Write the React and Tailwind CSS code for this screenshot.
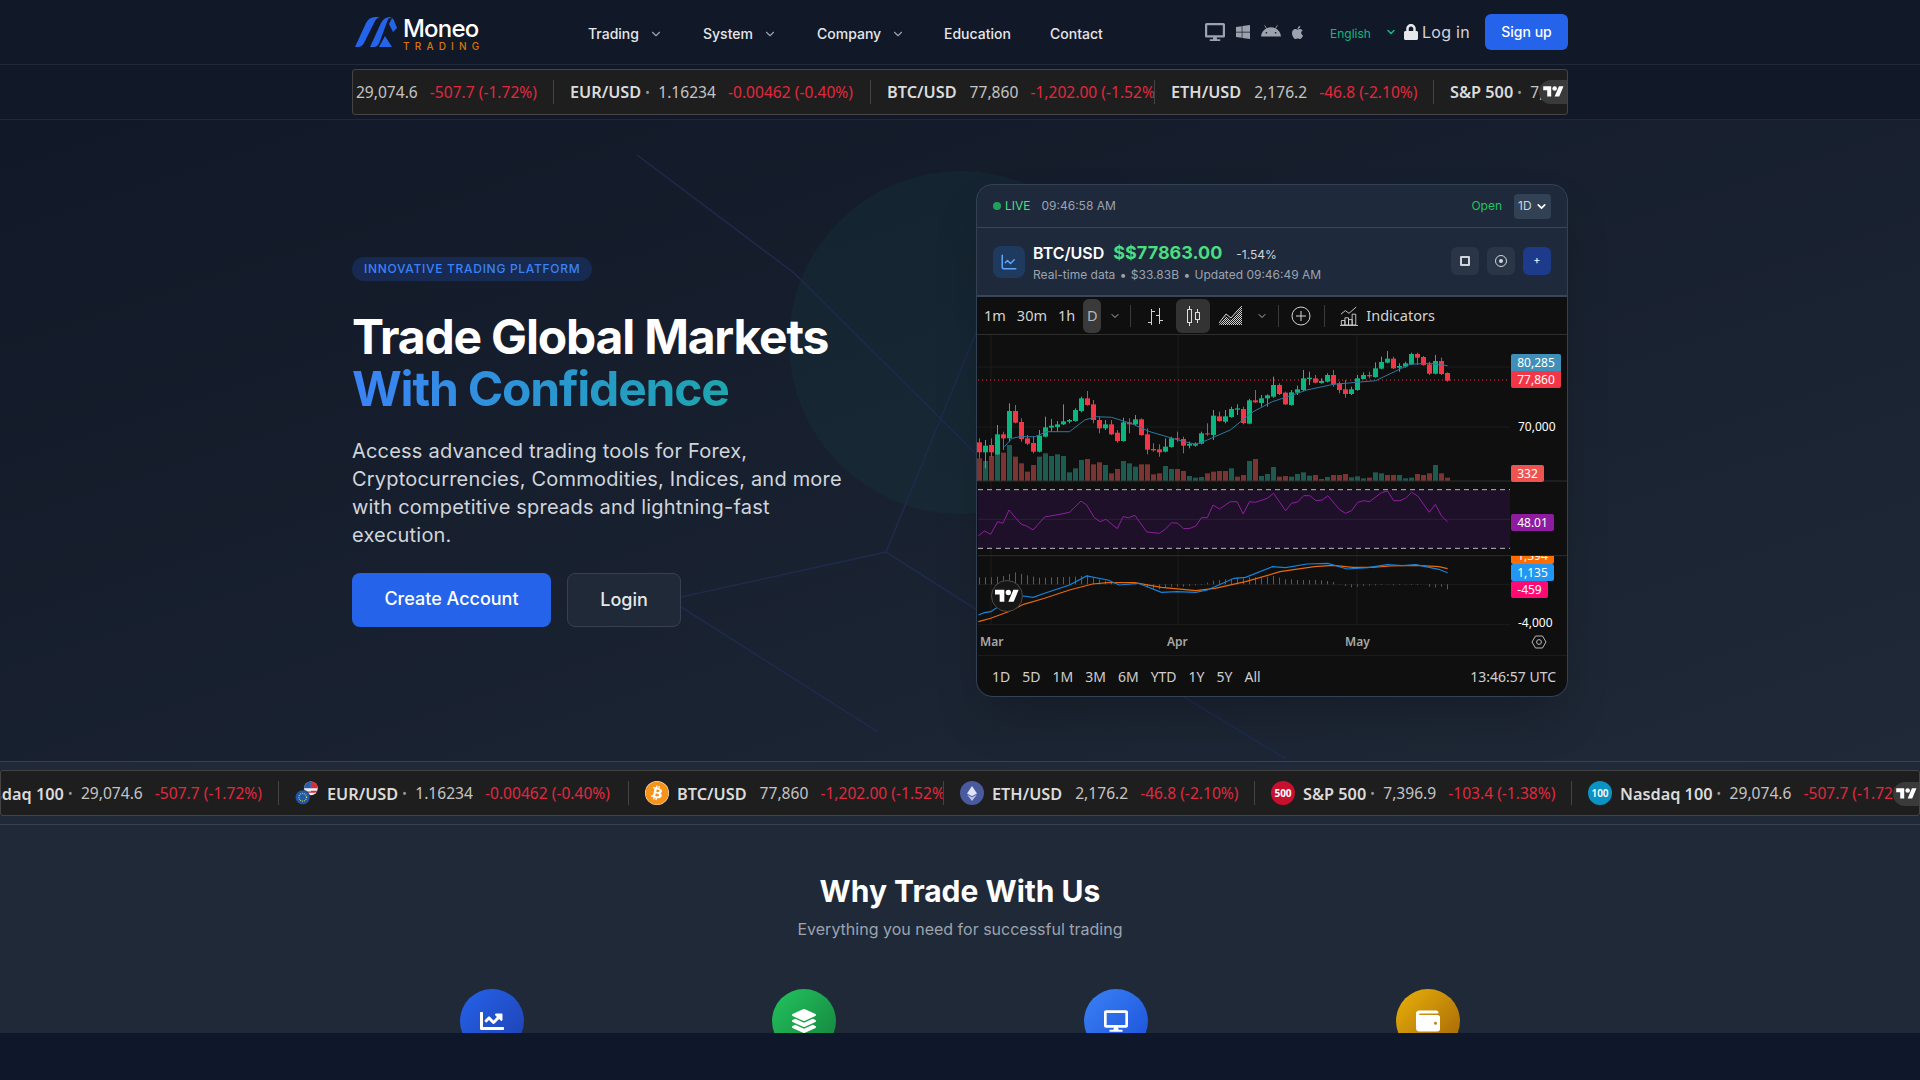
import { ChartLine, ChevronDown } from "lucide-react"
import {
  FaAndroid,
  FaApple,
  FaBitcoin,
  FaChartLine,
  FaDesktop,
  FaLayerGroup,
  FaLock,
  FaWallet,
  FaWindows,
} from "react-icons/fa"

// chart data was read off the screenshot: [bodyTop, bodyBottom, wickTop, wickBottom, up]
const candles = [
  [802,832,790,850,0],[812,832,795,880,1],[810,832,790,845,0],[778,838,750,840,1],[778,790,770,825,0],
  [708,790,685,800,1],[708,743,690,745,0],[741,792,730,800,0],[790,806,780,810,0],[804,830,785,835,0],
  [782,830,765,832,1],[757,785,725,787,1],[752,758,732,770,1],[748,756,738,770,1],[739,748,688,750,1],
  [735,740,732,745,1],[705,738,700,740,1],[670,708,665,712,1],[670,690,648,692,0],[688,735,675,745,0],
  [735,760,725,775,0],[748,760,735,765,1],[748,778,735,780,0],[773,798,765,803,0],[742,798,728,800,1],
  [742,748,730,775,0],[733,748,720,750,1],[733,780,730,782,0],[778,824,760,838,0],[822,826,805,830,0],
  [823,832,808,845,0],[815,830,790,832,1],[790,816,785,818,1],[790,793,770,800,0],[792,812,785,835,0],
  [807,812,800,820,1],[806,812,802,815,1],[775,806,770,808,1],[775,778,745,782,0],[722,780,705,795,1],
  [724,738,710,740,0],[724,740,705,745,1],[702,726,695,728,1],[700,704,688,720,1],[702,744,695,748,0],
  [676,746,672,748,1],[676,682,645,684,0],[670,684,660,695,1],[661,670,658,695,1],[630,665,605,668,1],
  [630,657,625,660,0],[653,688,650,690,0],[652,690,645,692,1],[643,653,632,660,1],[610,645,585,648,1],
  [608,612,590,630,1],[610,623,600,625,0],[618,624,610,626,1],[600,620,595,622,1],[600,628,585,635,0],
  [625,645,620,655,0],[643,657,615,668,0],[643,657,635,660,1],[610,645,600,647,1],[600,612,592,613,1],
  [600,604,590,610,0],[580,606,562,608,1],[561,581,545,583,1],[551,563,528,565,1],[551,580,545,582,0],
  [573,578,565,590,1],[565,575,560,578,1],[537,568,533,570,1],[537,548,533,570,0],[546,570,543,572,0],
  [568,596,560,600,0],[558,596,540,598,1],[558,597,548,600,0],[594,617,592,620,0],
]

// volume heights, negative = red bar
const volumes = [
  -68,60,-75,93,-85,108,-73,-53,-28,-48,73,83,75,80,75,26,38,63,-66,-50,-56,48,-23,-36,60,53,43,-50,-50,-20,
  -23,45,36,-36,-30,15,10,12,-23,-28,-30,-30,38,-13,-18,60,-66,15,21,42,-13,-15,13,21,26,16,-18,-6,12,-18,
  -18,-21,11,14,8,-10,26,23,-18,-18,18,8,10,-21,-18,-23,48,-23,-10,
]

const macdHist = [
  322,322,322,320,318,312,307,312,316,320,323,323,322,321,321,320,320,318,316,322,328,332,338,342,345,345,342,
  346,352,358,358,353,350,350,350,348,346,345,338,332,330,328,326,322,324,322,322,323,320,318,323,328,328,330,
  330,330,330,331,333,336,342,348,352,350,348,347,346,345,344,346,345,344,345,345,343,350,352,350,358,
]

const maLine = [[90,815],[110,790],[130,785],[170,785],[200,770],[260,770],[300,735],[330,725],[370,727],[420,745],[470,770],[520,787],[560,800],[590,808],[620,795],[680,765],[740,710],[790,680],[830,665],[880,645],[950,628],[1010,622],[1060,617],[1100,595],[1150,568],[1200,565],[1248,572]]
const rsiLine = [[22,197],[38,183],[54,193],[72,155],[86,160],[102,120],[133,162],[148,168],[165,180],[195,141],[230,134],[260,127],[290,93],[305,105],[325,143],[340,155],[355,148],[385,176],[400,140],[415,143],[431,136],[462,186],[495,190],[510,178],[527,158],[543,160],[558,176],[575,175],[590,168],[605,143],[620,143],[635,105],[652,117],[680,95],[698,95],[714,132],[730,95],[746,97],[777,85],[793,70],[825,122],[840,100],[856,96],[872,77],[888,77],[904,92],[920,90],[935,77],[965,118],[981,130],[997,122],[1013,97],[1030,92],[1044,95],[1075,68],[1091,63],[1107,92],[1123,92],[1138,85],[1154,67],[1170,78],[1200,127],[1216,103],[1232,138],[1248,155]]
const macdLine = [[22,435],[38,428],[54,425],[72,412],[100,395],[140,378],[165,382],[195,370],[260,345],[305,318],[360,330],[390,345],[440,340],[500,367],[540,365],[590,367],[620,360],[690,325],[720,322],[790,290],[825,293],[880,282],[935,280],[985,297],[1040,293],[1090,284],[1130,287],[1165,284],[1200,292],[1225,298],[1248,308]]
const signalLine = [[22,455],[54,445],[100,425],[140,403],[195,385],[260,360],[320,342],[360,338],[430,338],[500,352],[590,362],[640,355],[720,335],[810,305],[900,290],[950,286],[1000,292],[1050,292],[1100,288],[1165,286],[1225,290],[1248,296]]

const X = (v) => v / 2.613 - 8
const Y = (v) => v / 3 - 160
const Y2 = (v) => v / 3 + 135
const pts = (list, yFn) => list.map(([a, b]) => `${X(a).toFixed(1)},${yFn(b).toFixed(1)}`).join(" ")

const TvLogo = ({ className }) => (
  <svg viewBox="0 0 36 28" className={className} fill="currentColor">
    <path d="M14 22H7V11H0V4h14v18zM28 22h-8l7.5-18h8L28 22z" />
    <circle cx="20" cy="8" r="4" />
  </svg>
)

const Logo = () => (
  <div className="flex items-start gap-[6px]">
    <svg viewBox="0 0 42 30" className="w-[42px] h-[30px] mt-[17px]" fill="#2563eb">
      <path d="M0 30 L11 6 Q14 0 20 0 H25 Q21 1 19 6 L9 26 Q7 30 3 30 Z" />
      <path d="M15 30 L26 6 Q29 0 35 0 H37 Q33 1 32 5 L25 24 Q23 30 19 30 Z" />
      <path d="M37 1 Q39 2 40 6 L42 11 L38 15 L34 7 Z" />
      <path d="M24 30 L30 19 L37 30 Z" />
    </svg>
    <div className="flex flex-col mt-[14px]">
      <span className="text-[24px] leading-[30px] font-medium tracking-[-0.8px] text-white">Moneo</span>
      <span className="text-[10px] leading-[10px] tracking-[5.2px] font-medium text-[#d97706] -mt-[3px]">TRADING</span>
    </div>
  </div>
)

const NavItem = ({ label, width, chevron }) => (
  <div className={`${width} flex items-center text-sm font-medium text-gray-200`}>
    <span>{label}</span>
    {chevron && <ChevronDown className="w-[14px] h-[14px] ml-[10px] text-gray-400" strokeWidth={2} />}
  </div>
)

const EurUsdIcon = () => (
  <svg viewBox="0 0 28 28" className="w-[24px] h-[24px] shrink-0">
    <circle cx="18.5" cy="8.5" r="8" fill="#f0f0f0" />
    <path d="M18.5.5a8 8 0 0 1 8 8h-8z" fill="#d22f3c" />
    <path d="M10.5 8.5a8 8 0 0 1 8-8v8z" fill="#2a5caa" />
    <path d="M18.5 4h7M18.5 12h7M13 13h11" stroke="#d22f3c" strokeWidth="1.5" />
    <circle cx="9" cy="19" r="8.5" fill="#1f5aa8" stroke="#1e1e1e" strokeWidth="0.5" />
    <circle cx="9" cy="19" r="4.5" fill="none" stroke="#e8c93a" strokeWidth="1.4" strokeDasharray="1 1.2" />
  </svg>
)

const CoinIcon = ({ bg, children }) => (
  <div className={`${bg} w-[24px] h-[24px] rounded-full flex items-center justify-center shrink-0 text-white`}>
    {children}
  </div>
)

const icons = {
  eur: <EurUsdIcon />,
  btc: (
    <CoinIcon bg="bg-white">
      <FaBitcoin className="w-[24px] h-[24px] text-[#f7931a]" />
    </CoinIcon>
  ),
  eth: (
    <CoinIcon bg="bg-[#4a5a9e]">
      <svg viewBox="0 0 12 18" className="w-[10px] h-[15px]">
        <path d="M6 0 0 9l6 3.4L12 9z" fill="#dfe4f7" />
        <path d="M6 13.6 0 10.2 6 18l6-7.8z" fill="#b9c3ee" />
      </svg>
    </CoinIcon>
  ),
  spx: (
    <CoinIcon bg="bg-[#c8102e]">
      <span className="text-[10px] font-bold leading-none">500</span>
    </CoinIcon>
  ),
  ndx: (
    <CoinIcon bg="bg-[#0b93c4]">
      <span className="text-[10px] font-semibold leading-none">100</span>
    </CoinIcon>
  ),
}

const TickerItem = ({ item, width, withIcons, alignEnd, last }) => (
  <div
    className={`${width} h-[24px] shrink-0 flex items-center overflow-hidden whitespace-nowrap ${
      alignEnd ? "justify-end pr-[16px]" : "pl-[16px]"
    } ${last ? "" : "border-r border-[#434343]"}`}
  >
    {withIcons && item.icon && <div className="mr-[8px] shrink-0 flex">{icons[item.icon]}</div>}
    <div className="shrink-0 flex items-center mt-[2px]">
      <span className="shrink-0 font-semibold text-[16.3px] text-[#dbdbdb]">{item.name}</span>
      {item.dot ? (
        <span className="shrink-0 w-[17px] pl-[4px] text-[#9a9a9a] text-[12px]">•</span>
      ) : (
        <span className="shrink-0 w-[13px]" />
      )}
      <span className="shrink-0 text-[#c4c4c4]">{item.price}</span>
      <span className="shrink-0 ml-[12px] text-[#e0293f]">{item.change}</span>
    </div>
  </div>
)

const items = {
  eur: { icon: "eur", name: "EUR/USD", dot: true, price: "1.16234", change: "-0.00462 (-0.40%)" },
  btc: { icon: "btc", name: "BTC/USD", price: "77,860", change: "-1,202.00 (-1.52%)" },
  eth: { icon: "eth", name: "ETH/USD", price: "2,176.2", change: "-46.8 (-2.10%)" },
  spx: { icon: "spx", name: "S&P 500", dot: true, price: "7,396.9", change: "-103.4 (-1.38%)" },
  ndx: { icon: "ndx", name: "Nasdaq 100", dot: true, price: "29,074.6", change: "-507.7 (-1.72%)" },
}

const TvBadge = ({ className }) => (
  <div className={`absolute right-0 bg-[#3a3a3a] rounded-l-full flex items-center justify-center text-white ${className}`}>
    <TvLogo className="w-[21px] h-[16px]" />
  </div>
)

const TopTicker = () => (
  <div className="relative w-[1216px] h-[46px] mx-auto flex items-center bg-[#1e1e1e] border border-[#434343] rounded-[3px] overflow-hidden font-['Noto_Sans',sans-serif] text-[15.6px]">
    <TickerItem item={items.ndx} width="w-[201px]" alignEnd />
    <TickerItem item={items.eur} width="w-[317px]" />
    <TickerItem item={items.btc} width="w-[284px]" />
    <TickerItem item={items.eth} width="w-[279px]" />
    <TickerItem item={items.spx} width="w-[200px]" last />
    <TvBadge className="top-[10px] w-[28px] h-[24px]" />
  </div>
)

const BottomTicker = () => (
  <div className="relative w-full h-[46px] flex items-center bg-[#1e1e1e] border border-[#434343] rounded-[3px] overflow-hidden font-['Noto_Sans',sans-serif] text-[15.6px]">
    <TickerItem item={items.ndx} width="w-[278px]" alignEnd />
    <TickerItem item={items.eur} withIcons width="w-[350px]" />
    <TickerItem item={items.btc} withIcons width="w-[315px]" />
    <TickerItem item={items.eth} withIcons width="w-[311px]" />
    <TickerItem item={items.spx} withIcons width="w-[317px]" />
    <TickerItem item={items.ndx} withIcons width="w-[349px]" last />
    <TvBadge className="top-[11px] w-[26px] h-[24px]" />
  </div>
)

const PriceTag = ({ className, children }) => (
  <div className={`absolute text-[12px] leading-[17px] text-white text-center ${className}`}>{children}</div>
)

const ChartArea = () => (
  <div className="relative h-[321px] overflow-hidden">
    <svg viewBox="0 0 590 321" className="absolute inset-0 w-[590px] h-[321px]">
      {/* grid */}
      {[13, 200, 379].map((x) => (
        <line key={x} x1={x + 1} x2={x + 1} y1="0" y2="290" stroke="#1d1d1d" />
      ))}
      {[32, 92].map((y) => (
        <line key={y} x1="0" x2="533" y1={y} y2={y} stroke="#1d1d1d" />
      ))}

      <g transform="translate(1 0)">
        {/* volume */}
        {volumes.map((v, i) => {
          const h = Math.abs(v) / 3
          return (
            <rect
              key={i}
              x={1.5 + i * 6 - 2.5}
              y={146 - h}
              width="5"
              height={h}
              fill={v < 0 ? "#7c3432" : "#1d5b50"}
            />
          )
        })}

        {/* price line */}
        <line x1="0" x2="532" y1="45" y2="45" stroke="#f23645" strokeDasharray="1 3" />

        {/* candles */}
        {candles.map(([top, bottom, wickTop, wickBottom, up], i) => {
          const x = 1.5 + i * 6
          return (
            <g key={i}>
              <line x1={x} x2={x} y1={Y(wickTop)} y2={Y(wickBottom)} stroke={up ? "#0fbf8f" : "#f23645"} />
              <rect x={x - 2.5} y={Y(top)} width="5" height={Math.max(1, (bottom - top) / 3)} fill={up ? "#0ab57f" : "#f23645"} />
            </g>
          )
        })}
        <polyline points={pts(maLine, Y)} fill="none" stroke="#2b7aa3" strokeWidth="1" />

        {/* rsi pane */}
        <line x1="0" x2="590" y1="146" y2="146" stroke="#2e2e2e" />
        <rect x="0" y={Y2(59)} width="532" height="59" fill="#1e1029" />
        <line x1="0" x2="532" y1={Y2(59)} y2={Y2(59)} stroke="#b8b8b8" strokeDasharray="5 4" />
        <line x1="0" x2="532" y1={Y2(235)} y2={Y2(235)} stroke="#b8b8b8" strokeDasharray="5 4" />
        <line x1="0" x2="532" y1={Y2(148)} y2={Y2(148)} stroke="#2c2035" />
        <polyline points={pts(rsiLine, Y2)} fill="none" stroke="#8e1f9e" strokeWidth="1" />

        {/* macd pane */}
        <line x1="0" x2="590" y1={Y2(257)} y2={Y2(257)} stroke="#2e2e2e" />
        <line x1="0" x2="532" y1={Y2(343)} y2={Y2(343)} stroke="#1d1d1d" />
        <line x1="0" x2="532" y1={Y2(464)} y2={Y2(464)} stroke="#1d1d1d" />
        {macdHist.map((v, i) => {
          const x = 1.5 + i * 6
          return <line key={i} x1={x} x2={x} y1={Y2(343)} y2={Y2(v)} stroke="#f00a6a" />
        })}
        <polyline points={pts(signalLine, Y2)} fill="none" stroke="#e8690b" strokeWidth="1.2" />
        <polyline points={pts(macdLine, Y2)} fill="none" stroke="#1185e0" strokeWidth="1.2" />
        <line x1="0" x2="590" y1={Y2(558)} y2={Y2(558)} stroke="#2a2a2a" />

        {/* settings hexagon */}
        <g transform="translate(561 307)" fill="none" stroke="#b8b8b8" strokeWidth="1">
          <path d="M-7 0-3.5-6h7L7 0 3.5 6h-7z" />
          <circle r="2.4" />
        </g>
      </g>
    </svg>

    <PriceTag className="left-[534px] top-[19px] w-[50px] bg-[#3f8fb8] rounded-t-[2px]">80,285</PriceTag>
    <PriceTag className="left-[534px] top-[36px] w-[50px] bg-[#f23645] rounded-b-[2px]">77,860</PriceTag>
    <PriceTag className="left-[541px] top-[83px] text-[#b2b2b2]">70,000</PriceTag>
    <PriceTag className="left-[534px] top-[130px] w-[33px] bg-[#ef5350] rounded-[2px]">332</PriceTag>
    <PriceTag className="left-[534px] top-[179px] w-[43px] bg-[#8e1ba0] rounded-[2px]">48.01</PriceTag>
    <PriceTag className="left-[534px] top-[221px] w-[43px] h-[8px] overflow-hidden bg-[#ff6d00] !leading-[0px] rounded-b-[2px]">1,394</PriceTag>
    <PriceTag className="left-[534px] top-[229px] w-[43px] bg-[#2196f3] rounded-[2px]">1,135</PriceTag>
    <PriceTag className="left-[534px] top-[246px] w-[37px] bg-[#ff0a73] rounded-[2px]">-459</PriceTag>
    <PriceTag className="left-[541px] top-[279px] text-[#b2b2b2]">-4,000</PriceTag>

    <span className="absolute left-[3px] top-[299px] text-[12px] leading-[16px] font-semibold text-[#a8a8a8]">Mar</span>
    <span className="absolute left-[190px] top-[299px] text-[12px] leading-[16px] font-semibold text-[#a8a8a8]">Apr</span>
    <span className="absolute left-[368px] top-[299px] text-[12px] leading-[16px] font-semibold text-[#a8a8a8]">May</span>

    <div className="absolute left-[14px] top-[245px] w-[32px] h-[32px] rounded-full bg-[#161616] border-[1.5px] border-[#4a4a4a] flex items-center justify-center text-white">
      <TvLogo className="w-[24px] h-[19px]" />
    </div>
  </div>
)

const ToolSep = () => <div className="w-px h-[22px] bg-[#3a3a3a] shrink-0" />

const ChartToolbar = () => (
  <div className="h-[38px] flex items-center border-b border-[#2e2e2e] text-[14.5px] text-[#d4d4d4]">
    <span className="ml-[7px]">1m</span>
    <span className="ml-[11px]">30m</span>
    <span className="ml-[11px]">1h</span>
    <span className="ml-[8px] w-[18px] h-[34px] rounded-[6px] bg-[#3a3a3a] flex items-center justify-center text-[#b8b8b8]">D</span>
    <ChevronDown className="w-[12px] h-[12px] ml-[8px] text-[#b2b2b2]" />
    <div className="ml-[9px]"><ToolSep /></div>
    <svg viewBox="0 0 28 28" className="w-[28px] h-[28px] ml-[10px] text-[#d4d4d4]" fill="currentColor">
      <path d="M19 6h-1v7h-3v1h3v8h1v-3h3v-1h-3V6ZM11 7h-1v13H7v1h3v2h1V10h3V9h-3V7Z" />
    </svg>
    <div className="ml-[7px] w-[34px] h-[34px] rounded-[6px] bg-[#333333] flex items-center justify-center">
      <svg viewBox="0 0 28 28" className="w-[28px] h-[28px] text-[#e0e0e0]" fill="currentColor">
        <path d="M17 11v6h3v-6h-3zm-.5-1h4a.5.5 0 0 1 .5.5v7a.5.5 0 0 1-.5.5h-4a.5.5 0 0 1-.5-.5v-7a.5.5 0 0 1 .5-.5z" />
        <path d="M18 7h1v3.5h-1zm0 10.5h1V21h-1z" />
        <path d="M9 8v12h3V8H9zm-.5-1h4a.5.5 0 0 1 .5.5v13a.5.5 0 0 1-.5.5h-4a.5.5 0 0 1-.5-.5v-13a.5.5 0 0 1 .5-.5z" />
        <path d="M10 4h1v3.5h-1zm0 16.5h1V24h-1z" />
      </svg>
    </div>
    <svg viewBox="0 0 24 20" className="w-[24px] h-[20px] ml-[9px]">
      <defs>
        <pattern id="hatch" width="2" height="2" patternUnits="userSpaceOnUse">
          <rect width="1" height="1" fill="#d4d4d4" />
          <rect x="1" y="1" width="1" height="1" fill="#d4d4d4" />
        </pattern>
      </defs>
      <path d="M0 19 7 10l5 4 6-7 5-6v18z" fill="url(#hatch)" />
      <path d="M0 17 7 8l5 4 6-7 5-5" fill="none" stroke="#d4d4d4" />
    </svg>
    <ChevronDown className="w-[12px] h-[12px] ml-[13px] text-[#b2b2b2]" />
    <div className="ml-[10px]"><ToolSep /></div>
    <svg viewBox="0 0 20 20" className="w-[20px] h-[20px] ml-[12px]" fill="none" stroke="#d4d4d4">
      <circle cx="10" cy="10" r="9" />
      <path d="M10 5v10M5 10h10" />
    </svg>
    <div className="ml-[13px]"><ToolSep /></div>
    <svg viewBox="0 0 20 22" className="w-[18px] h-[20px] ml-[15px]" fill="none" stroke="#d4d4d4">
      <path d="M1 9l5-4 4 3 8-7" />
      <path d="M1.5 21v-5h4v5zM5.5 21v-8h4v8zM9.5 21v-6h4v6zM13.5 21V9h4v12zM0 21.5h20" />
    </svg>
    <span className="ml-[8px]">Indicators</span>
  </div>
)

const ChartCard = () => (
  <div className="w-[592px] h-[513px] rounded-2xl border border-[#334155] bg-[#1e293b] overflow-hidden shadow-2xl flex flex-col shrink-0">
    <div className="h-[43px] shrink-0 flex items-center justify-between px-[16px] border-b border-[#3a4557] text-[12px]">
      <div className="flex items-center">
        <span className="w-[8px] h-[8px] rounded-full bg-[#22a05a]" />
        <span className="ml-[4px] text-[#4ade80]">LIVE</span>
        <span className="ml-[11px] text-[#9ca3af]">09:46:58 AM</span>
      </div>
      <div className="flex items-center">
        <span className="text-[#22c55e]">Open</span>
        <div className="ml-[12px] w-[37px] h-[25px] rounded-[4px] bg-[#334155] flex items-center pl-[4px] text-[#cbd5e1]">
          1D
          <ChevronDown className="w-[13px] h-[13px] ml-[3px] text-white" strokeWidth={3} />
        </div>
      </div>
    </div>
    <div className="h-[69px] shrink-0 flex items-center pl-[16px] pr-[16px] border-b-2 border-[#3a4557]">
      <div className="w-[32px] h-[32px] rounded-lg bg-[#1e3a5f] flex items-center justify-center">
        <ChartLine className="w-[18px] h-[18px] text-[#60a5fa]" strokeWidth={2} />
      </div>
      <div className="ml-[8px] mt-[2px] flex flex-col">
        <div className="flex items-baseline">
          <span className="text-[16px] leading-[22px] font-semibold text-white">BTC/USD</span>
          <span className="ml-[9px] text-[18px] leading-[22px] font-bold text-[#4ade80]">$$77863.00</span>
          <span className="ml-[14px] text-[12px] text-[#d1d5db]">-1.54%</span>
        </div>
        <div className="mt-[3px] text-[12px] leading-[16px] text-[#9ca3af]">
          Real-time data <span className="mx-[1px]">•</span> $33.83B <span className="mx-[1px]">•</span> Updated 09:46:49 AM
        </div>
      </div>
      <div className="ml-auto mb-[2px] flex items-center gap-[8px]">
        <div className="w-[28px] h-[28px] rounded-md bg-[#2a3648] flex items-center justify-center">
          <span className="w-[10px] h-[10px] border-2 border-[#d1d5db] rounded-[1px]" />
        </div>
        <div className="w-[28px] h-[28px] rounded-md bg-[#2a3648] flex items-center justify-center">
          <span className="w-[12px] h-[12px] border-[1.5px] border-[#d1d5db] rounded-full flex items-center justify-center">
            <span className="w-[4px] h-[4px] rounded-full bg-[#d1d5db]" />
          </span>
        </div>
        <div className="w-[28px] h-[28px] rounded-md bg-[#1e3a8a] flex items-center justify-center text-[11px] leading-none text-white">+</div>
      </div>
    </div>
    <div className="flex-1 bg-[#0f0f0f] flex flex-col rounded-b-2xl overflow-hidden font-['Noto_Sans',sans-serif]">
      <ChartToolbar />
      <ChartArea />
      <div className="h-[40px] flex items-center text-[14px] text-[#cfcfcf] pl-[15px] pr-[11px]">
        <div className="flex gap-[12px]">
          {["1D", "5D", "1M", "3M", "6M", "YTD", "1Y", "5Y", "All"].map((r) => (
            <span key={r}>{r}</span>
          ))}
        </div>
        <span className="ml-auto">13:46:57 UTC</span>
      </div>
    </div>
  </div>
)

const HeroLines = () => (
  <svg className="absolute inset-0 w-full h-full" viewBox="0 120 1920 641" fill="none" stroke="#1f2a4d" strokeWidth="1.5">
    <path d="M637 155 794 273 977 455" />
    <path d="M977 330 886 552 681 597" />
    <path d="M886 552 977 610" />
    <path d="M681 607 878 732" />
    <path d="M1184 697 1286 759" />
  </svg>
)

const features = [
  { Icon: FaChartLine, bg: "bg-gradient-to-br from-[#2563eb] to-[#1e40af]" },
  { Icon: FaLayerGroup, bg: "bg-gradient-to-br from-[#22c55e] to-[#15803d]" },
  { Icon: FaDesktop, bg: "bg-gradient-to-br from-[#3b82f6] to-[#1d4ed8]" },
  { Icon: FaWallet, bg: "bg-gradient-to-br from-[#eab308] to-[#a16207]" },
]

export default function App() {
  return (
    <div className="h-screen flex flex-col overflow-hidden bg-[#0f172a] font-['Inter',sans-serif]">
      <main className="h-[1033px] shrink-0 overflow-hidden bg-[#1f2937]">
        <header className="h-[65px] bg-[#111827] border-b border-[#1f2937]">
          <div className="w-[1216px] mx-auto flex">
            <div className="w-[236px] pl-[3px]">
              <Logo />
            </div>
            <nav className="flex items-center h-[67px]">
              <NavItem label="Trading" width="w-[115px]" chevron />
              <NavItem label="System" width="w-[114px]" chevron />
              <NavItem label="Company" width="w-[127px]" chevron />
              <NavItem label="Education" width="w-[106px]" />
              <NavItem label="Contact" width="w-[80px]" />
            </nav>
            <div className="ml-auto h-[64px] flex items-center text-[#9ca3af]">
              <FaDesktop className="w-[20px] h-[20px]" />
              <FaWindows className="w-[16px] h-[16px] ml-[10px]" />
              <FaAndroid className="w-[20px] h-[20px] ml-[10px]" />
              <FaApple className="w-[15px] h-[15px] ml-[9px]" />
              <span className="ml-[25px] text-[12px] mt-[3px] text-[#10b981]">English</span>
              <ChevronDown className="w-[12px] h-[12px] ml-[14px] text-[#10b981]" strokeWidth={3} />
              <FaLock className="w-[14px] h-[16px] ml-[7px] text-gray-200" />
              <span className="ml-[4px] text-[16px] tracking-[0.3px] text-gray-300">Log in</span>
              <button className="ml-[15px] w-[83px] h-[36px] rounded-md bg-[#2563eb] text-sm font-medium text-white">Sign up</button>
            </div>
          </div>
        </header>
        <div className="h-[55px] bg-[#111827] border-b border-[#1f2937] flex items-center pb-[1px]">
          <TopTicker />
        </div>

        <section className="relative h-[641px] overflow-hidden bg-gradient-to-br from-[#111827] to-[#1f2937]">
          <div className="absolute left-[789px] top-[51px] w-[343px] h-[343px] rounded-full bg-[#14b8a6]/5" />
          <HeroLines />
          <div className="relative w-[1216px] h-full mx-auto flex items-center justify-between">
            <div className="w-[520px] pt-[2px] flex flex-col items-start">
              <span className="h-[24px] px-[12px] rounded-full bg-[#2563eb]/20 text-[12px] leading-[24px] font-medium tracking-[0.7px] text-[#3b82f6]">
                INNOVATIVE TRADING PLATFORM
              </span>
              <h1 className="mt-[30px] text-[48px] leading-[52px] font-bold tracking-[-1.2px] text-white">
                Trade Global Markets
                <br />
                <span className="bg-gradient-to-r from-[#3b82f6] to-[#1ea5ad] bg-clip-text text-transparent">With Confidence</span>
              </h1>
              <p className="mt-[22px] w-[500px] text-[20px] leading-[28px] tracking-[0.2px] text-[#d1d5db]">
                Access advanced trading tools for Forex, Cryptocurrencies, Commodities, Indices, and more with competitive spreads and lightning-fast execution.
              </p>
              <div className="mt-[24px] flex gap-[16px]">
                <button className="w-[199px] h-[54px] pb-[2px] rounded-lg bg-[#2563eb] text-[18px] font-medium text-white">Create Account</button>
                <button className="w-[114px] h-[54px] rounded-lg bg-[#1f2937] border border-[#374151] text-[18px] font-medium text-gray-200">Login</button>
              </div>
            </div>
            <ChartCard />
          </div>
        </section>

        <div className="h-[64px] flex items-center border-y border-[#374151]">
          <BottomTicker />
        </div>

        <section className="pt-[48px]">
          <h2 className="text-[30px] leading-[36px] font-bold text-white text-center">Why Trade With Us</h2>
          <p className="mt-[8px] text-[16px] leading-[24px] text-[#9ca3af] text-center">Everything you need for successful trading</p>
          <div className="mt-[48px] w-[1216px] mx-auto grid grid-cols-4 gap-[32px]">
            {features.map(({ Icon, bg }, i) => (
              <div key={i} className="flex justify-center">
                <div className={`${bg} w-[64px] h-[64px] rounded-full flex items-center justify-center`}>
                  <Icon className="w-[24px] h-[24px] text-white" />
                </div>
              </div>
            ))}
          </div>
        </section>
      </main>
      <footer className="flex-1 bg-[#0f172a]" />
    </div>
  )
}
